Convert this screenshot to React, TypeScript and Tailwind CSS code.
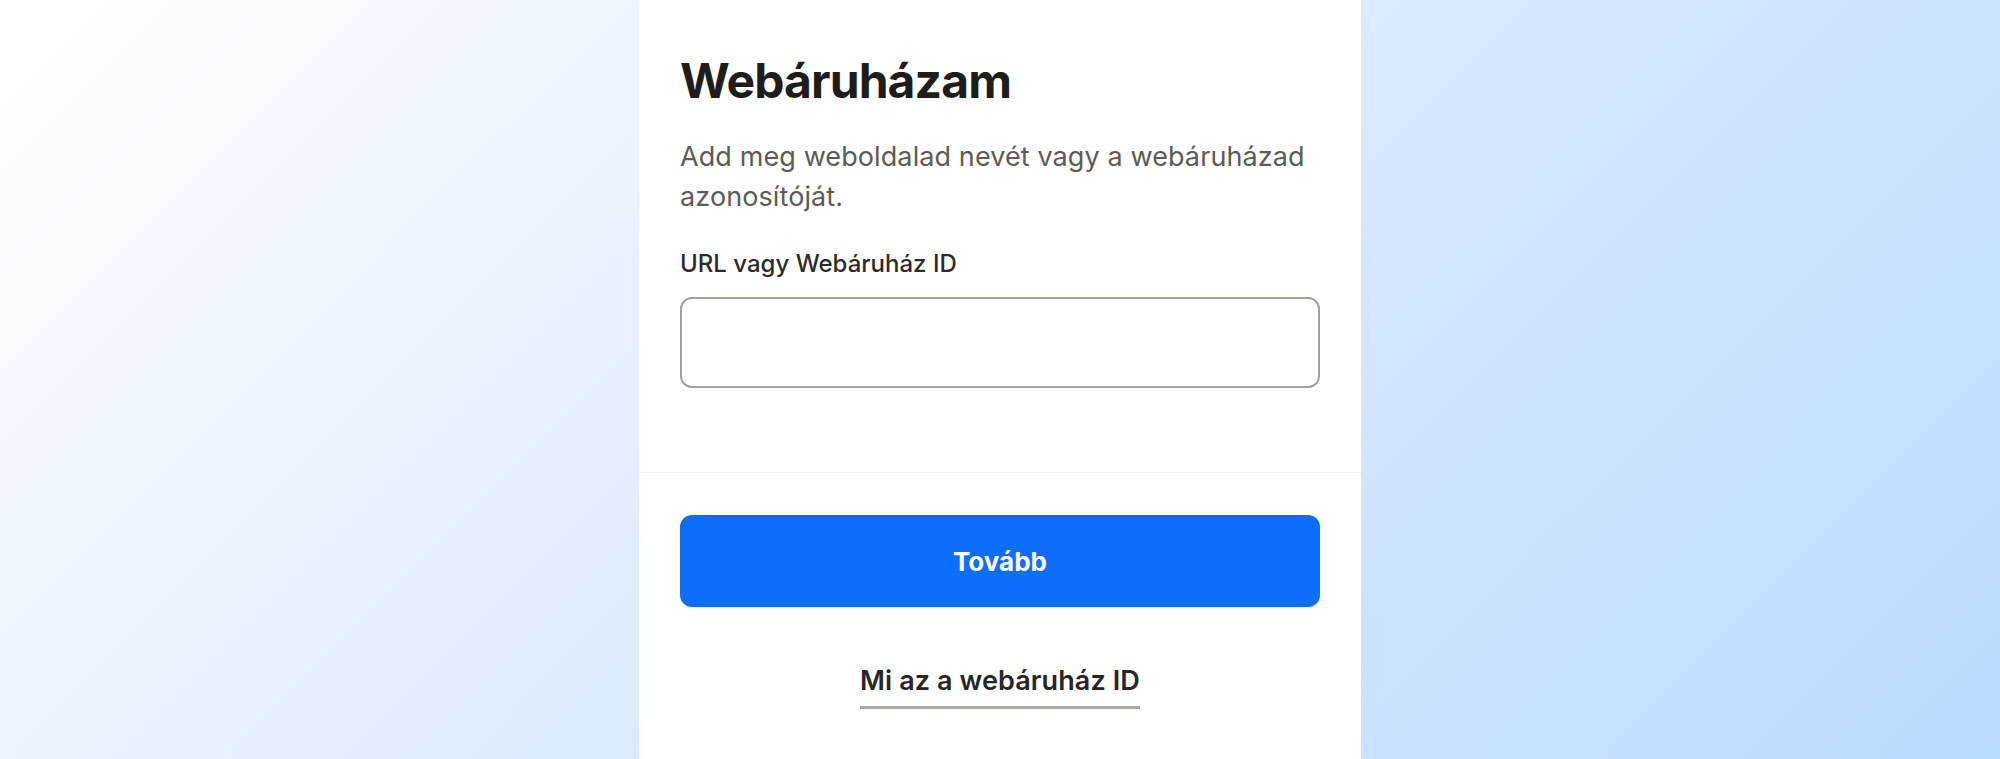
import React from "react";

export default function App() {
  return (
    <div
      className="min-h-screen w-full flex justify-center bg-[linear-gradient(135deg,#ffffff_0%,#dbeafe_50%,#b9dbfe_100%)]"
      style={{ fontFamily: "Inter, 'Noto Sans', sans-serif" }}
    >
      <div className="w-[722px] min-h-[759px] bg-white flex flex-col">
        <div className="px-[41px] pt-[52px] pb-[84px] border-b border-[#eeeeec]">
          <h1 className="text-[48px] leading-[58px] font-bold text-[#1d1d1b] tracking-[-0.9px]">
            Webáruházam
          </h1>
          <p className="mt-[27px] text-[27px] leading-[40px] tracking-[0.1px] text-[#5b5b57]">
            Add meg weboldalad nevét vagy a webáruházad azonosítóját.
          </p>
          <label className="block mt-[33px] text-[24px] leading-[28px] font-medium text-[#2b2b2b]">
            URL vagy Webáruház ID
          </label>
          <input
            type="text"
            className="mt-[19px] w-full h-[91px] rounded-[12px] border-2 border-[#a3a19a] bg-white px-4 text-[22px] outline-none"
          />
        </div>
        <div className="px-[41px] pt-[42px] flex flex-col items-center">
          <button className="w-full h-[92px] rounded-[12px] bg-[#0d6efd] text-white text-[26px] font-bold">
            Tovább
          </button>
          <a
            href="#"
            className="mt-[57px] text-[27px] leading-[34px] font-semibold tracking-[0.1px] text-[#262626] border-b-[3px] border-[#aaa8a0] pb-[8px]"
          >
            Mi az a webáruház ID
          </a>
        </div>
      </div>
    </div>
  );
}
